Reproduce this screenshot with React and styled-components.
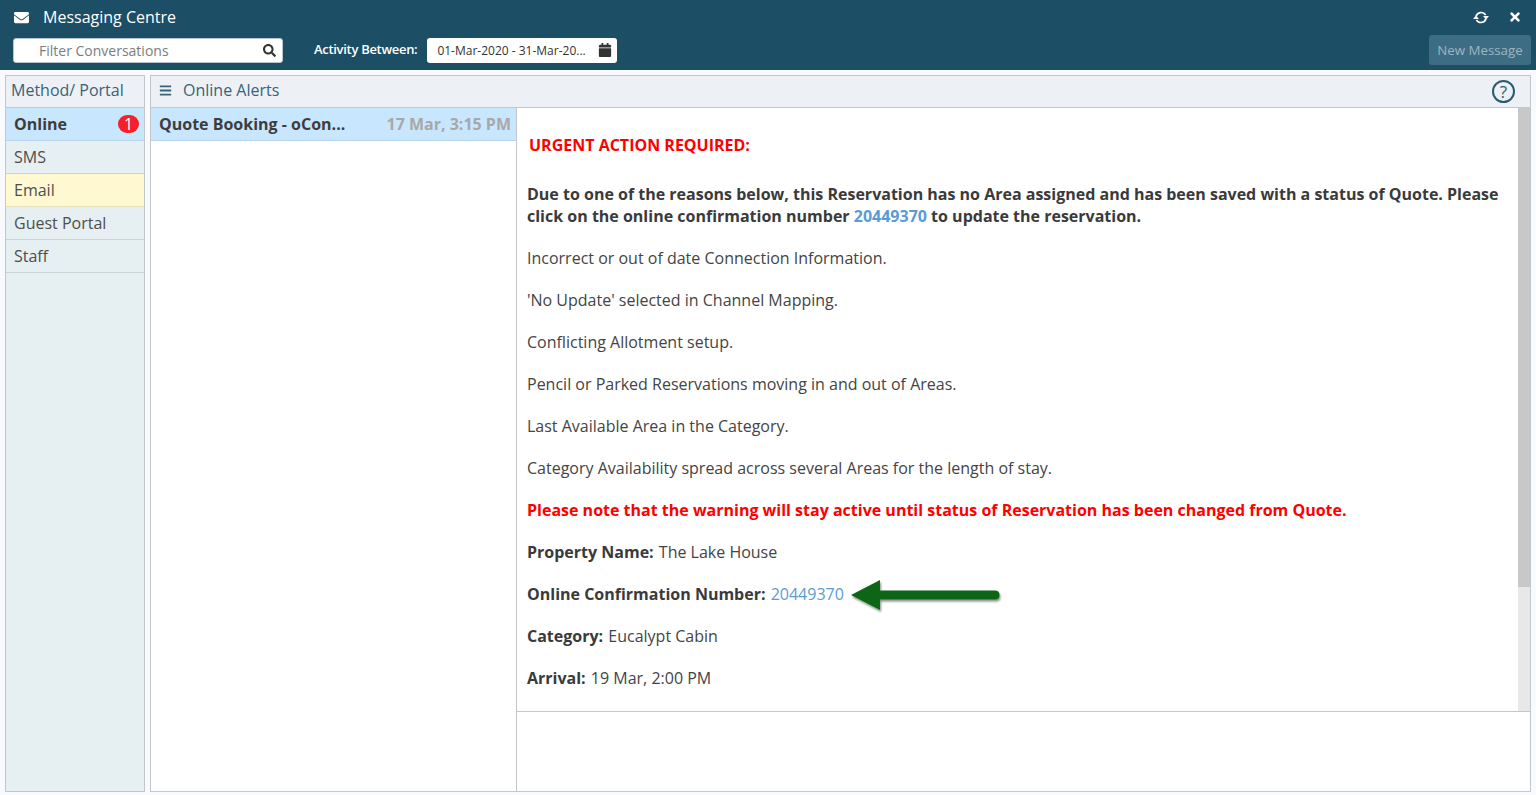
import styled, { createGlobalStyle } from 'styled-components';
import { FaEnvelope, FaSearch, FaCalendar, FaTimes, FaBars } from 'react-icons/fa';

const GlobalStyle = createGlobalStyle`
  html, body {
    margin: 0;
    height: 100%;
    overflow: hidden;
    background: #f9fafd;
    font-family: "Open Sans", "Liberation Sans", sans-serif;
  }
  * { box-sizing: border-box; }
`;

const Page = styled.div`
  height: 795px;
  display: flex;
  flex-direction: column;
`;

const Header = styled.header`
  height: 70px;
  flex: none;
  background: #1c4e66;
  color: #fff;
  padding: 0 5px 0 13px;
`;

const TitleRow = styled.div`
  height: 34px;
  display: flex;
  align-items: center;
  gap: 14px;
  font-size: 16px;
  padding-left: 1px;
  svg { flex: none; }
`;

const AppTitle = styled.div`
  flex: 1;
`;

const WindowButtons = styled.div`
  display: flex;
  align-items: center;
  gap: 19px;
  padding-right: 9px;
`;

const ToolRow = styled.div`
  height: 32px;
  display: flex;
  align-items: center;
`;

const FilterBox = styled.div`
  width: 270px;
  height: 25px;
  background: #fff;
  border: 1px solid #b9c4cc;
  border-radius: 3px;
  color: #7d7d7d;
  font-size: 14px;
  display: flex;
  align-items: center;
  justify-content: space-between;
  padding: 0 6px 0 25px;
  svg { color: #333; }
`;

const ActivityLabel = styled.div`
  margin-left: 31px;
  font-size: 13px;
  font-weight: 600;
  letter-spacing: -0.3px;
  padding-bottom: 2px;
`;

const DateBox = styled.div`
  margin-left: 10px;
  width: 190px;
  height: 25px;
  background: #fff;
  border-radius: 3px;
  color: #333;
  font-size: 12px;
  display: flex;
  align-items: center;
  justify-content: space-between;
  padding: 0 5px 0 10px;
`;

const NewMessage = styled.div`
  margin-left: auto;
  width: 102px;
  height: 30px;
  border-radius: 3px;
  background: #3d6d84;
  color: #9fb4c0;
  font-size: 13.3px;
  display: flex;
  align-items: center;
  justify-content: center;
`;

const Body = styled.div`
  height: 717px;
  margin: 5px 5px 0;
  display: flex;
  gap: 5px;
`;

const SidePanel = styled.aside`
  width: 140px;
  flex: none;
  background: #e6eff1;
  border: 1px solid #c3c7ca;
`;

const SideHeading = styled.div`
  height: 32px;
  background: #edf1f6;
  border-bottom: 1px solid #c3c7ca;
  color: #396377;
  font-size: 16px;
  line-height: 29px;
  padding-left: 5px;
`;

const SideItem = styled.div`
  height: 33px;
  padding: 0 5px 0 8px;
  display: flex;
  align-items: center;
  justify-content: space-between;
  font-size: 16px;
  color: ${p => (p.$active ? '#3d3d3d' : '#4e4e4e')};
  font-weight: ${p => (p.$active ? 700 : 400)};
  background: ${p => (p.$active ? '#c9e6ff' : p.$highlight ? '#fff8d0' : 'transparent')};
  border-bottom: 1px solid ${p => (p.$active ? '#b6d3ea' : p.$highlight ? '#e6e2bd' : '#ccd3d6')};
`;

const Badge = styled.span`
  width: 21px;
  height: 18px;
  border-radius: 9px;
  background: #f5202c;
  color: #fff;
  font-size: 16px;
  font-weight: 400;
  line-height: 18px;
  text-align: center;
`;

const MainPanel = styled.main`
  flex: 1;
  min-width: 0;
  display: flex;
  flex-direction: column;
  background: #fff;
  border: 1px solid #c3c7ca;
`;

const MainHeading = styled.div`
  height: 32px;
  flex: none;
  background: #edf1f6;
  border-bottom: 1px solid #c3c7ca;
  color: #396377;
  font-size: 16px;
  display: flex;
  align-items: center;
  gap: 11px;
  padding: 0 15px 2px 8px;
`;

const HeadingText = styled.div`
  flex: 1;
  margin-bottom: 1px;
`;

const HelpIcon = styled.span`
  width: 23px;
  height: 23px;
  margin-top: 2px;
  border: 2px solid #2b5a70;
  border-radius: 50%;
  color: #2b5a70;
  font-size: 17px;
  line-height: 19px;
  text-align: center;
`;

const Split = styled.div`
  flex: 1;
  min-height: 0;
  display: flex;
`;

const ConversationList = styled.div`
  width: 366px;
  flex: none;
  border-right: 1px solid #c3c7ca;
`;

const ConversationRow = styled.div`
  height: 33px;
  background: #c9e6ff;
  border-bottom: 1px solid #b6d3ea;
  display: flex;
  align-items: center;
  justify-content: space-between;
  padding: 0 5px 0 8px;
  font-size: 16px;
  font-weight: 700;
  color: #3d3d3d;
`;

const ConversationTime = styled.span`
  color: #a8a8a8;
`;

const MessagePane = styled.div`
  flex: 1;
  min-width: 0;
  display: flex;
  flex-direction: column;
`;

const MessageFrame = styled.div`
  height: 604px;
  flex: none;
  display: flex;
  border-bottom: 1px solid #c3c7ca;
`;

const MessageContent = styled.div`
  flex: 1;
  min-width: 0;
  overflow: hidden;
  padding: 26px 0 0 10px;
  color: #444;
  font-size: 16px;
  line-height: 22px;
`;

const ScrollTrack = styled.div`
  width: 12px;
  flex: none;
  background: #e8e8e8;
`;

const ScrollThumb = styled.div`
  height: 479px;
  background: #c8c8c8;
`;

const Para = styled.p`
  margin: 0 0 20px;
`;

const Urgent = styled.p`
  margin: 0 0 27px 2px;
  color: #f00;
  font-weight: 700;
`;

const Strong = styled.b`
  font-weight: 700;
  color: #3a3a3a;
`;

const Label = styled(Strong)`
  margin-right: 1px;
`;

const Warning = styled.b`
  font-weight: 700;
  color: #f00;
`;

const NumberLink = styled.a`
  color: #5b9bd5;
  font-weight: ${p => (p.$bold ? 700 : 400)};
`;

const Arrow = styled.svg`
  width: 156px;
  height: 36px;
  margin: -10px 0 -10px 5px;
  vertical-align: middle;
`;

const ReplyArea = styled.div`
  flex: 1;
`;

// loop icon, thin arcs with a solid head on each end
const RefreshIcon = () => (
  <svg width="16" height="15" viewBox="0 0 16 15" fill="none">
    <path d="M3 6.5 A5.2 5.2 0 0 1 12.6 5.2" stroke="#fff" strokeWidth="1.7" />
    <path d="M13 8.5 A5.2 5.2 0 0 1 3.4 9.8" stroke="#fff" strokeWidth="1.7" />
    <path d="M10 6 H16 L13 9.5 Z" fill="#fff" />
    <path d="M0 9 H6 L3 5.5 Z" fill="#fff" />
  </svg>
);

export default function App() {
  return (
    <Page>
      <GlobalStyle />
      <Header>
        <TitleRow>
          <FaEnvelope size={15} />
          <AppTitle>Messaging Centre</AppTitle>
          <WindowButtons>
            <RefreshIcon />
            <FaTimes size={14} />
          </WindowButtons>
        </TitleRow>
        <ToolRow>
          <FilterBox>
            Filter Conversations
            <FaSearch size={13} />
          </FilterBox>
          <ActivityLabel>Activity Between:</ActivityLabel>
          <DateBox>
            01-Mar-2020 - 31-Mar-20...
            <FaCalendar size={14} />
          </DateBox>
          <NewMessage>New Message</NewMessage>
        </ToolRow>
      </Header>
      <Body>
        <SidePanel>
          <SideHeading>Method/ Portal</SideHeading>
          <SideItem $active>
            Online
            <Badge>1</Badge>
          </SideItem>
          <SideItem>SMS</SideItem>
          <SideItem $highlight>Email</SideItem>
          <SideItem>Guest Portal</SideItem>
          <SideItem>Staff</SideItem>
        </SidePanel>
        <MainPanel>
          <MainHeading>
            <FaBars size={13} />
            <HeadingText>Online Alerts</HeadingText>
            <HelpIcon>?</HelpIcon>
          </MainHeading>
          <Split>
            <ConversationList>
              <ConversationRow>
                Quote Booking - oCon...
                <ConversationTime>17 Mar, 3:15 PM</ConversationTime>
              </ConversationRow>
            </ConversationList>
            <MessagePane>
              <MessageFrame>
                <MessageContent>
                  <Urgent>URGENT ACTION REQUIRED:</Urgent>
                  <Para>
                    <Strong>
                      Due to one of the reasons below, this Reservation has no Area assigned and has been saved with a status of Quote. Please click on the online confirmation number <NumberLink $bold>20449370</NumberLink> to update the reservation.
                    </Strong>
                  </Para>
                  <Para>Incorrect or out of date Connection Information.</Para>
                  <Para>'No Update' selected in Channel Mapping.</Para>
                  <Para>Conflicting Allotment setup.</Para>
                  <Para>Pencil or Parked Reservations moving in and out of Areas.</Para>
                  <Para>Last Available Area in the Category.</Para>
                  <Para>Category Availability spread across several Areas for the length of stay.</Para>
                  <Para>
                    <Warning>Please note that the warning will stay active until status of Reservation has been changed from Quote.</Warning>
                  </Para>
                  <Para>
                    <Label>Property Name:</Label> The Lake House
                  </Para>
                  <Para>
                    <Label>Online Confirmation Number:</Label> <NumberLink>20449370</NumberLink>
                    <Arrow viewBox="0 0 156 36">
                      <defs>
                        <filter id="arrowShadow" x="-5%" y="-20%" width="110%" height="150%">
                          <feDropShadow dx="1" dy="2" stdDeviation="1.2" floodColor="#000" floodOpacity="0.45" />
                        </filter>
                      </defs>
                      <path
                        d="M2 17 L31 2 L31 12.5 L146 12.5 Q150.5 12.5 150.5 17 Q150.5 21.5 146 21.5 L31 21.5 L31 32 Z"
                        fill="#0c6614"
                        filter="url(#arrowShadow)"
                      />
                    </Arrow>
                  </Para>
                  <Para>
                    <Label>Category:</Label> Eucalypt Cabin
                  </Para>
                  <Para>
                    <Label>Arrival:</Label> 19 Mar, 2:00 PM
                  </Para>
                </MessageContent>
                <ScrollTrack>
                  <ScrollThumb />
                </ScrollTrack>
              </MessageFrame>
              <ReplyArea />
            </MessagePane>
          </Split>
        </MainPanel>
      </Body>
    </Page>
  );
}
